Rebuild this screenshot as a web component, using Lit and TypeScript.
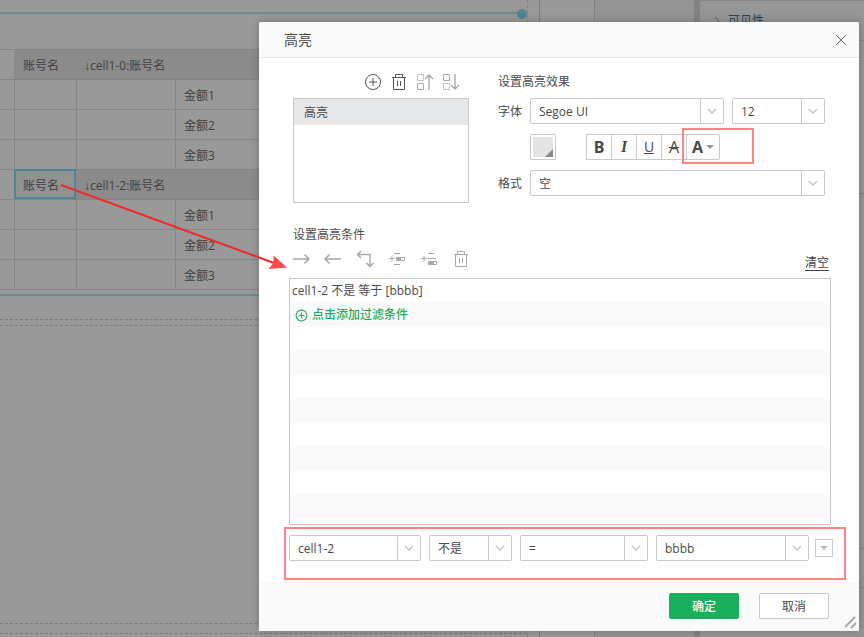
import { LitElement, html, css, svg, nothing } from "lit";
import { customElement, property } from "lit/decorators.js";
import { classMap } from "lit/directives/class-map.js";

const icons: Record<string, unknown> = {
  close: svg`<path d="M4 4l10 10M14 4L4 14"/>`,
  add: svg`<circle cx="9" cy="9" r="7.5"/><path d="M9 5v8M5 9h8"/>`,
  trash: svg`<path d="M2 4.500h14M5.500 4.500V1.500h7V4.500M3.500 4.500v12h11v-12M7.500 8v5M10.500 8v5"/>`,
  up: svg`<path stroke-dasharray="2 1" d="M1.500 1.500h6v6h-6z"/><path d="M1.500 10.500h6v6h-6z"/><path stroke-width="1.4" d="M13 17V2M9 6l4-4 4 4"/>`,
  down: svg`<path stroke-dasharray="2 1" d="M1.500 10.500h6v6h-6z"/><path d="M1.500 1.500h6v6h-6z"/><path stroke-width="1.4" d="M13 1v15M9 12l4 4 4-4"/>`,
  right: svg`<path stroke-width="1.5" d="M1 9h16M12.500 4.500L17 9l-4.500 4.500"/>`,
  left: svg`<path stroke-width="1.5" d="M17 9H1M5.500 4.500L1 9l4.500 4.500"/>`,
  turn: svg`<path stroke-width="1.4" d="M5 1L1.500 4.500 5 8M1.500 4.500h12.500v12M10.500 13l3.500 3.500 3.500-3.500"/>`,
  insert: svg`<path d="M1 8.500h6M4 5.500v6M6 3.500h6M6 14.500h6M8.500 7.500h8v3h-8z"/><path d="M9 9h4" stroke-width="2"/>`,
  append: svg`<path d="M1 8.500h6M4 5.500v6M8 3.500h6M8 8.500h8M8.500 11.500h8v3h-8z"/><path d="M9 13h5" stroke-width="2"/>`,
};

const icon = (name: string) => html`<svg class="icon" viewBox="0 0 18 18" aria-hidden="true">${icons[name]}</svg>`;

const base = css`
  * { box-sizing: border-box; }
  button, select {
    font: inherit;
    color: inherit;
    margin: 0;
    padding: 0;
    border: 0;
    background: none;
  }
  .icon {
    display: block;
    width: 18px;
    height: 18px;
    fill: none;
    stroke: currentColor;
  }
`;

@customElement("drop-down")
class DropDown extends LitElement {
  @property() value = "";
  @property() label = "";

  static styles = [base, css`
    :host { display: grid; min-width: 0; height: 26px; }
    .box {
      display: grid;
      border: 1px solid #c9c9c9;
      border-radius: 2px;
      background: #fff;
    }
    select {
      grid-area: 1 / 1;
      appearance: none;
      width: 100%;
      min-width: 0;
      padding: 2px 24px 0 8px;
      border-radius: 2px;
    }
    .arrow {
      grid-area: 1 / 1;
      justify-self: end;
      display: grid;
      place-items: center;
      width: 23px;
      border-left: 1px solid #c9c9c9;
      pointer-events: none;
    }
    .chevron { width: 10px; height: 6px; fill: none; stroke: #c8c8c8; stroke-width: 1.6; }
  `];

  render() {
    return html`<div class="box">
      <select aria-label=${this.label}><option>${this.value}</option></select>
      <span class="arrow"><svg class="chevron" viewBox="0 0 10 6"><path d="M1 1l4 4 4-4"/></svg></span>
    </div>`;
  }
}

@customElement("report-canvas")
class ReportCanvas extends LitElement {
  static styles = [base, css`
    :host {
      display: grid;
      grid-template-columns: 540px 55px 1fr 6px 164px;
      color: #404040;
      background: #999;
    }
    .page { display: flex; flex-direction: column; border-right: 1px solid #7d7d7d; }
    .inner { flex: 1; display: flex; flex-direction: column; width: 528px; border-right: 1px dashed #808080; }
    .rule { height: 14px; border-bottom: 2px solid #6b8b92; margin-right: 6px; position: relative; }
    .knob {
      position: absolute;
      right: -6px;
      bottom: -7px;
      width: 10px;
      height: 10px;
      border-radius: 50%;
      background: #4d8594;
    }
    table { width: 100%; margin-top: 35px; table-layout: fixed; border-spacing: 0; }
    .c0 { width: 14px; }
    .c1 { width: 62px; }
    .c2 { width: 99px; }
    td {
      height: 30px;
      padding: 2px 0 0 8px;
      border-top: 1px solid #858585;
      border-left: 1px solid #858585;
      line-height: 18px;
      white-space: nowrap;
    }
    td:first-child { border-left: 0; }
    tr.head td { border-left: 0; background: #8b8b8b; }
    tr.head td:first-child { background: none; }
    tr.head .name { padding-left: 9px; }
    tr.head .picked { outline: 2px solid #4d8594; outline-offset: -2px; background: #929292; }
    .down { font-family: "Liberation Sans", sans-serif; }
    .end { height: 7px; border-top: 1px solid #858585; border-bottom: 2px solid #6b8b92; }
    .dash { border-top: 1px dashed #7c7c7c; }
    .space { height: 23px; }
    .band { height: 6px; }
    .fill { flex: 1; }
    .foot { height: 10px; }
    .last { height: 4px; }
    .margin { border-right: 1px solid #838383; }
    .blank { background: #949494; }
    .scroll { background: #838383; }
    .panel { background: #969696; }
    .group { height: 41px; border-top: 1px solid #878787; border-bottom: 1px solid #878787; display: flex; align-items: center; gap: 6px; padding-left: 12px; color: #24445a; }
    .section { border-bottom: 1px solid #878787; }
    .tall { height: 153px; }
    .taller { height: 355px; }
    .short { height: 39px; }
    .fold { width: 10px; height: 10px; fill: none; stroke: #555; }
  `];

  private head(ref: string, picked = false) {
    return html`<tr class="head">
      <td></td>
      <td class=${classMap({ name: true, picked })}>账号名</td>
      <td colspan="2"><span class="down">↓</span>${ref}</td>
    </tr>`;
  }

  private rows() {
    return ["金额1", "金额2", "金额3"].map((t) => html`<tr><td></td><td></td><td></td><td>${t}</td></tr>`);
  }

  render() {
    return html`
      <div class="page"><div class="inner">
        <div class="rule"><span class="knob"></span></div>
        <table>
          <colgroup><col class="c0"><col class="c1"><col class="c2"><col></colgroup>
          <tbody>
            ${this.head("cell1-0:账号名")}${this.rows()}
            ${this.head("cell1-2:账号名", true)}${this.rows()}
          </tbody>
        </table>
        <div class="end"></div>
        <div class="space"></div>
        <div class="dash band"></div>
        <div class="dash fill"></div>
        <div class="dash foot"></div>
        <div class="dash last"></div>
      </div></div>
      <div class="margin"></div>
      <div class="blank"></div>
      <div class="scroll"></div>
      <div class="panel">
        <div class="group"><svg class="fold" viewBox="0 0 10 10"><path d="M3 1l4 4-4 4"/></svg>可见性</div>
        <div class="section tall"></div><div class="section taller"></div><div class="section short"></div>
      </div>`;
  }
}

@customElement("highlight-dialog")
class HighlightDialog extends LitElement {
  static styles = [base, css`
    :host {
      display: flex;
      flex-direction: column;
      color: #4a4a4a;
      background: #fff;
      box-shadow: 0 0 8px rgba(0, 0, 0, 0.25);
      border-radius: 2px;
    }
    header {
      display: flex;
      align-items: center;
      justify-content: space-between;
      height: 36px;
      padding: 0 9px 0 25px;
      border-bottom: 1px solid #e6e6e6;
      background: #fafafa;
      border-radius: 2px 2px 0 0;
    }
    h1 { margin: 0; font-size: 14px; font-weight: 400; }
    h2 { margin: 0; font-size: 12px; font-weight: 400; line-height: 24px; }
    .close { color: #666; }
    .body { flex: 1; display: flex; flex-direction: column; padding: 12px 26px 20px 30px; position: relative; }
    .top { display: flex; gap: 29px; padding: 0 8px 0 4px; }
    .styles { width: 176px; }
    .tools { display: flex; align-items: center; height: 24px; }
    .styles .tools { justify-content: flex-end; gap: 8px; padding-right: 9px; margin-bottom: 4px; color: #555; }
    .tools button:disabled { color: #a8a8a8; }
    .list { margin: 0; padding: 0; list-style: none; border: 1px solid #c9c9c9; }
    .names { height: 105px; }
    .names li { height: 26px; padding-left: 10px; line-height: 28px; background: #e6e7e9; }
    .effects { flex: 1; min-width: 0; display: flex; flex-direction: column; gap: 10px; }
    .effects h2 { margin-bottom: -6px; }
    .line { display: grid; grid-template-columns: 32px 1fr; align-items: center; }
    .caption { padding-top: 2px; }
    .fonts { display: grid; grid-template-columns: 194fr 93fr; gap: 8px; }
    .text { display: flex; gap: 30px; }
    .swatch { width: 26px; height: 26px; padding: 2px; border: 1px solid #c9c9c9; border-radius: 2px; }
    .swatch svg { display: block; width: 20px; height: 20px; }
    .marks { display: flex; }
    .marks button {
      width: 26px;
      height: 26px;
      margin-right: -1px;
      border: 1px solid #c9c9c9;
      font-size: 14px;
      line-height: 24px;
    }
    .marks .b { font-weight: 700; font-size: 16px; }
    .marks .i { font-family: "Liberation Serif", serif; font-style: italic; font-weight: 700; font-size: 16px; }
    .marks .u { text-decoration: underline; }
    .marks .s { font-size: 16px; text-decoration: line-through; }
    .marks .color { display: flex; align-items: center; justify-content: center; gap: 3px; width: 34px; font-weight: 700; font-size: 16px; border-radius: 2px; }
    .tri { width: 8px; height: 4px; fill: #999; }
    .conditions { margin: 20px 2px 0 0; padding-left: 4px; }
    .bar { display: flex; justify-content: space-between; height: 31px; margin-right: 4px; padding-left: 3px; }
    .bar .tools { gap: 14px; }
    .clear { align-self: flex-end; margin-bottom: 7px; line-height: 15px; border-bottom: 1px solid #444; color: #444; text-decoration: none; }
    .rules { flex: 1; margin-right: 2px; }
    .rules li { height: 24px; padding-left: 2px; line-height: 24px; }
    .rules li:nth-child(even) { background: #fafafa; }
    .new { display: flex; align-items: center; gap: 4px; height: 24px; padding-left: 3px; color: #1aaf5d; font-weight: 500; }
    .new .icon { width: 13px; height: 13px; stroke-width: 1.5; }
    .edit { display: grid; grid-template-columns: 132fr 83fr 128fr 153fr 16px; gap: 8px; align-items: center; margin-top: 10px; }
    .more { display: grid; place-items: center; width: 18px; height: 18px; border: 1px solid #c9c9c9; justify-self: end; }
    .more .tri { fill: #bbb; }
    .mark { position: absolute; border: 2px solid #ff8585; pointer-events: none; }
    .on-color { top: 70px; right: 105px; width: 72px; height: 36px; }
    .on-edit { left: 25px; right: 13px; bottom: 1px; height: 53px; }
    footer {
      display: flex;
      justify-content: flex-end;
      gap: 20px;
      height: 50px;
      padding: 12px 30px 0 0;
      background: #fafafa;
      position: relative;
    }
    footer button { width: 70px; height: 26px; padding-top: 2px; border: 1px solid #c9c9c9; border-radius: 2px; background: #fff; }
    footer .ok { border-color: #1aaf5d; background: #1aaf5d; color: #fff; font-weight: 500; }
    .grip { position: absolute; right: 2px; bottom: 2px; width: 14px; height: 14px; stroke: #aaa; stroke-width: 2; }
  `];

  private tool(name: string, label: string, disabled = true) {
    return html`<button aria-label=${label} ?disabled=${disabled}>${icon(name)}</button>`;
  }

  render() {
    const tri = html`<svg class="tri" viewBox="0 0 8 4"><path d="M0 0h8L4 4z"/></svg>`;
    return html`
      <header><h1>高亮</h1><button class="close" aria-label="关闭">${icon("close")}</button></header>
      <div class="body">
        <div class="top">
          <div class="styles">
            <div class="tools">
              ${this.tool("add", "添加", false)}${this.tool("trash", "删除", false)}
              ${this.tool("up", "上移")}${this.tool("down", "下移")}
            </div>
            <ul class="list names"><li>高亮</li></ul>
          </div>
          <div class="effects">
            <h2>设置高亮效果</h2>
            <div class="line"><span class="caption">字体</span>
              <div class="fonts"><drop-down label="字体" value="Segoe UI"></drop-down><drop-down label="字号" value="12"></drop-down></div>
            </div>
            <div class="line"><span></span>
              <div class="text">
                <button class="swatch" aria-label="背景色"><svg viewBox="0 0 20 20"><path fill="#e4e4e4" d="M0 0h20v20H0z"/><path fill="#888" d="M20 12v8h-8z"/></svg></button>
                <div class="marks">
                  <button class="b">B</button><button class="i">I</button><button class="u">U</button><button class="s">A</button>
                  <button class="color">A${tri}</button>
                </div>
              </div>
            </div>
            <div class="line"><span class="caption">格式</span><drop-down label="格式" value="空"></drop-down></div>
          </div>
        </div>
        <h2 class="conditions">设置高亮条件</h2>
        <div class="bar">
          <div class="tools">
            ${this.tool("right", "右移")}${this.tool("left", "左移")}${this.tool("turn", "切换")}
            ${this.tool("insert", "插入")}${this.tool("append", "追加")}${this.tool("trash", "删除条件")}
          </div>
          <a class="clear" href="#">清空</a>
        </div>
        <ul class="list rules">
          <li>cell1-2 不是 等于 [bbbb]</li>
          <li><button class="new">${icon("add")}点击添加过滤条件</button></li>
          ${Array.from({ length: 8 }, () => html`<li>${nothing}</li>`)}
        </ul>
        <div class="edit">
          <drop-down label="字段" value="cell1-2"></drop-down>
          <drop-down label="取反" value="不是"></drop-down>
          <drop-down label="运算符" value="="></drop-down>
          <drop-down label="值" value="bbbb"></drop-down>
          <button class="more" aria-label="更多">${tri}</button>
        </div>
        <span class="mark on-color"></span>
        <span class="mark on-edit"></span>
      </div>
      <footer>
        <button class="ok">确定</button><button>取消</button>
        <svg class="grip" viewBox="0 0 14 14"><path d="M2 12L12 2M8 13l5-5"/></svg>
      </footer>`;
  }
}

@customElement("app-root")
class AppRoot extends LitElement {
  static styles = css`
    :host {
      display: grid;
      min-height: 100vh;
      overflow: hidden;
      font: 12px/18px "Open Sans", "Noto Sans CJK SC", sans-serif;
    }
    report-canvas { grid-area: 1 / 1; min-width: 0; }
    .overlay { grid-area: 1 / 1; display: grid; padding: 22px 5px 6px 259px; z-index: 1; }
    .pointer { position: absolute; left: 0; top: 0; width: 300px; height: 280px; z-index: 2; pointer-events: none; }
  `;

  render() {
    return html`
      <report-canvas></report-canvas>
      <div class="overlay"><highlight-dialog role="dialog" aria-label="高亮"></highlight-dialog></div>
      <svg class="pointer" viewBox="0 0 300 280" aria-hidden="true">
        <path d="M61 185L274 263" stroke="#ef2b2b" stroke-width="2"/>
        <path d="M287 267.500L268.500 269 273.500 263 273.500 255.500z" fill="#ff4a4a"/>
      </svg>`;
  }
}
